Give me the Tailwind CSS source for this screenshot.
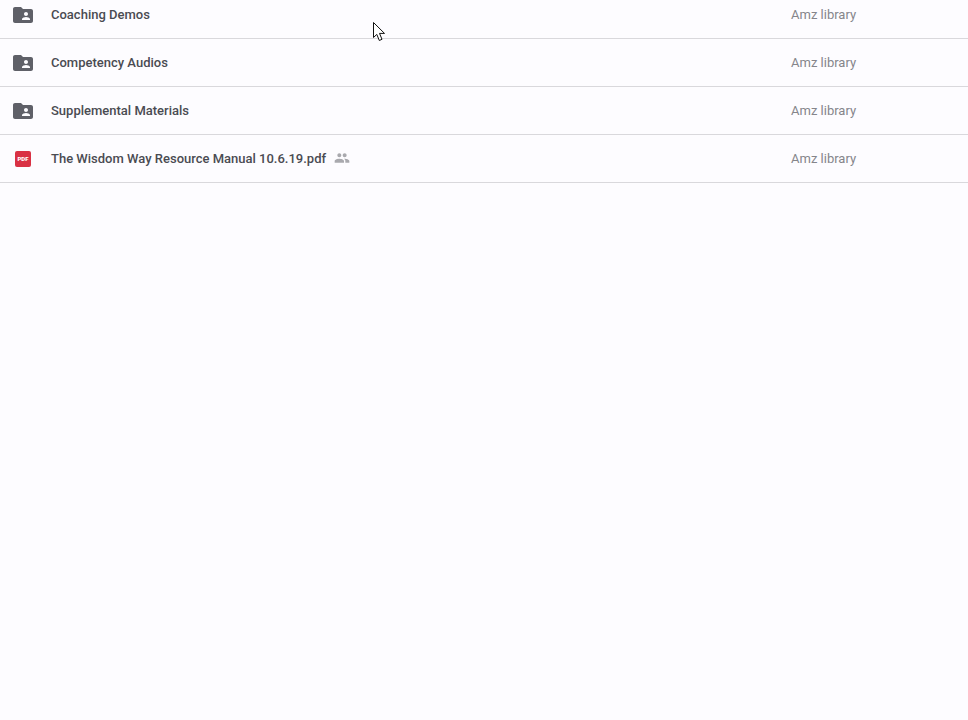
<!DOCTYPE html>
<html lang="en">
<head>
    <meta charset="UTF-8">
    <title>Drive</title>
    <script src="https://cdn.jsdelivr.net/npm/@tailwindcss/browser@4"></script>
</head>
<body class="bg-[#fdfcff] h-[720px] overflow-hidden relative font-['Roboto',sans-serif]">
    <div class="-mt-[9px]">
        <div class="flex items-center h-[48px] border-b border-[#d9d8dc]">
            <svg class="w-6 h-6 ml-[11px] fill-[#5f6068]" viewBox="0 0 24 24"><path d="M20 6h-8l-2-2H4c-1.1 0-1.99.9-1.99 2L2 18c0 1.1.9 2 2 2h16c1.1 0 2-.9 2-2V8c0-1.1-.9-2-2-2zm-5 3c1.1 0 2 .9 2 2s-.9 2-2 2-2-.9-2-2 .9-2 2-2zm4 8h-8v-1c0-1.33 2.67-2 4-2s4 .67 4 2v1z"/></svg>
            <span class="ml-[16px] text-[13px] font-medium text-[#4a4b52]">Coaching Demos</span>
            <span class="ml-auto w-[177px] text-[13px] text-[#85858b]">Amz library</span>
        </div>
        <div class="flex items-center h-[48px] border-b border-[#d9d8dc]">
            <svg class="w-6 h-6 ml-[11px] fill-[#5f6068]" viewBox="0 0 24 24"><path d="M20 6h-8l-2-2H4c-1.1 0-1.99.9-1.99 2L2 18c0 1.1.9 2 2 2h16c1.1 0 2-.9 2-2V8c0-1.1-.9-2-2-2zm-5 3c1.1 0 2 .9 2 2s-.9 2-2 2-2-.9-2-2 .9-2 2-2zm4 8h-8v-1c0-1.33 2.67-2 4-2s4 .67 4 2v1z"/></svg>
            <span class="ml-[16px] text-[13px] font-medium text-[#4a4b52]">Competency Audios</span>
            <span class="ml-auto w-[177px] text-[13px] text-[#85858b]">Amz library</span>
        </div>
        <div class="flex items-center h-[48px] border-b border-[#d9d8dc]">
            <svg class="w-6 h-6 ml-[11px] fill-[#5f6068]" viewBox="0 0 24 24"><path d="M20 6h-8l-2-2H4c-1.1 0-1.99.9-1.99 2L2 18c0 1.1.9 2 2 2h16c1.1 0 2-.9 2-2V8c0-1.1-.9-2-2-2zm-5 3c1.1 0 2 .9 2 2s-.9 2-2 2-2-.9-2-2 .9-2 2-2zm4 8h-8v-1c0-1.33 2.67-2 4-2s4 .67 4 2v1z"/></svg>
            <span class="ml-[16px] text-[13px] font-medium text-[#4a4b52]">Supplemental Materials</span>
            <span class="ml-auto w-[177px] text-[13px] text-[#85858b]">Amz library</span>
        </div>
        <div class="flex items-center h-[48px] border-b border-[#d9d8dc]">
            <div class="ml-[15px] w-4 h-4 rounded-[2px] bg-[#d93144] flex items-center justify-center text-white text-[6px] font-black leading-none">PDF</div>
            <span class="ml-[20px] text-[13px] font-medium text-[#4a4b52]">The Wisdom Way Resource Manual 10.6.19.pdf</span>
            <svg class="w-4 h-4 ml-[8px] -mt-[2px] fill-[#a9a9ae]" viewBox="0 0 24 24"><path d="M16 11c1.66 0 2.99-1.34 2.99-3S17.66 5 16 5c-1.66 0-3 1.34-3 3s1.34 3 3 3zm-8 0c1.66 0 2.99-1.34 2.99-3S9.66 5 8 5C6.34 5 5 6.34 5 8s1.34 3 3 3zm0 2c-2.33 0-7 1.17-7 3.5V19h14v-2.5c0-2.33-4.67-3.5-7-3.5zm8 0c-.29 0-.62.02-.97.05 1.16.84 1.97 1.97 1.97 3.45V19h6v-2.5c0-2.33-4.67-3.5-7-3.5z"/></svg>
            <span class="ml-auto w-[177px] text-[13px] text-[#85858b]">Amz library</span>
        </div>
    </div>
    <!-- mouse pointer -->
    <svg class="absolute left-[373px] top-[22px] w-[13px] h-[20px]" viewBox="0 0 13 20"><path d="M0.5 0.5V15.5L3.8 12.4L6.3 18.5L9 17.3L6.5 11.4H11.5Z" fill="#fff" stroke="#111" stroke-width="1"/></svg>
</body>
</html>
